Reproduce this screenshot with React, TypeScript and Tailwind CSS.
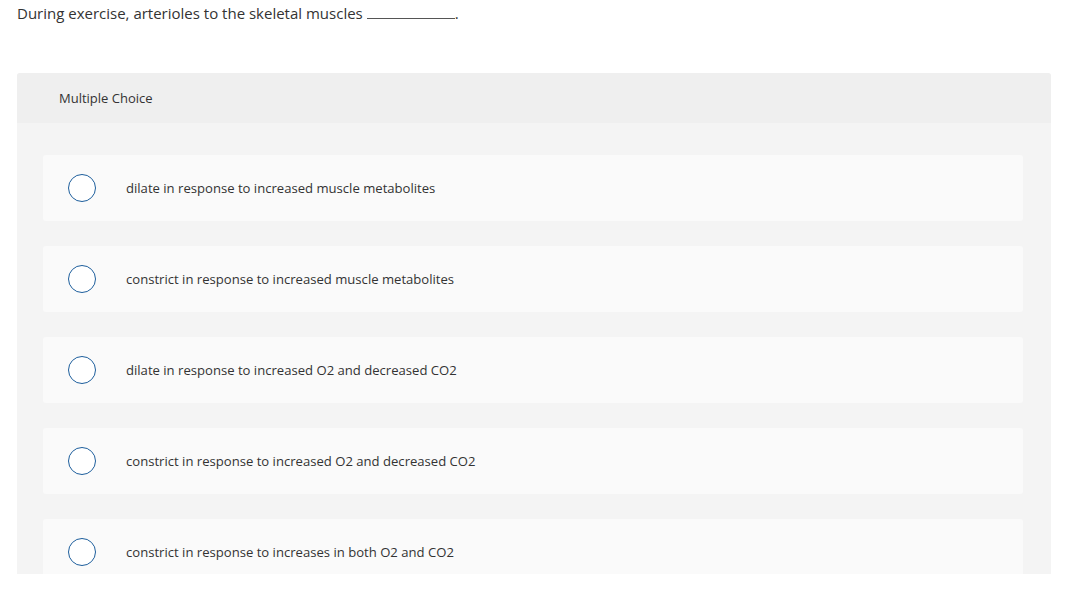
const OPTIONS = [
  'dilate in response to increased muscle metabolites',
  'constrict in response to increased muscle metabolites',
  'dilate in response to increased O2 and decreased CO2',
  'constrict in response to increased O2 and decreased CO2',
  'constrict in response to increases in both O2 and CO2',
]

function OptionRow({ label }: { label: string }) {
  return (
    <label className="flex h-[66px] shrink-0 items-center rounded-[3px] bg-[#fafafa] pl-[25px]">
      <span className="block h-[28px] w-[28px] shrink-0 rounded-full border-[1.5px] border-[#1d5e9c] bg-white" />
      <span className="ml-[30px] pt-[1px] text-[13.1px] text-[#333]">{label}</span>
    </label>
  )
}

export default function App() {
  return (
    <div className="h-[589px] overflow-hidden bg-white pl-[17px] pr-[37px] pt-[3px] font-['Open_Sans',Arial,sans-serif]">
      {/* Question */}
      <p className="text-[15px] leading-[20px] text-[#333]">
        During exercise, arterioles to the skeletal muscles{' '}
        <span className="inline-block w-[88px] border-b border-[#555] align-baseline" />.
      </p>

      {/* Multiple choice panel */}
      <div className="mt-[50px] flex h-[501px] flex-col overflow-hidden rounded-t-[3px] bg-[#f4f4f4]">
        <div className="flex h-[50px] shrink-0 items-center bg-[#efefef] pl-[42px] pt-[1px] text-[13px] text-[#333]">
          Multiple Choice
        </div>
        <div className="flex flex-col gap-[25px] pl-[26px] pr-[28px] pt-[32px]">
          {OPTIONS.map((o) => (
            <OptionRow key={o} label={o} />
          ))}
        </div>
      </div>
    </div>
  )
}
